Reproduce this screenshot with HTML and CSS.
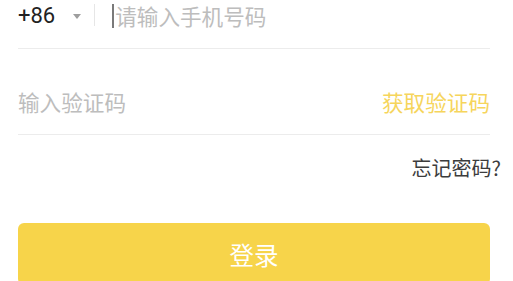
FILE: index.html
```html
<!DOCTYPE html>
<html lang="zh-CN">
<head>
<meta charset="utf-8">
<title>登录</title>
<link rel="stylesheet" href="styles.css">
</head>
<body>
<main class="login">
  <div class="field field--first">
    <div class="country">
      <span class="country-code">+86</span>
      <span class="arrow"></span>
    </div>
    <span class="sep"></span>
    <span class="caret"></span>
    <span class="placeholder">请输入手机号码</span>
  </div>
  <div class="field">
    <span class="placeholder">输入验证码</span>
    <span class="get-code">获取验证码</span>
  </div>
  <div class="forgot-row">
    <span class="forgot">忘记密码?</span>
  </div>
  <button class="submit" type="button">登录</button>
</main>
</body>
</html>
```
FILE: styles.css
```css
html, body {
  margin: 0;
  padding: 0;
  background: #ffffff;
  overflow: hidden;
}

body {
  font-family: "Noto Sans CJK SC", "Noto Sans", sans-serif;
}

.login {
  padding: 0 23px 0 18px;
  display: flex;
  flex-direction: column;
}

.field {
  display: flex;
  align-items: center;
  height: 32px;
  padding: 37px 0 16px;
  border-bottom: 1px solid #ececec;
}

.field--first {
  padding-top: 0;
}

.country {
  display: flex;
  align-items: center;
  gap: 18px;
}

.country-code {
  font-family: Roboto, "Noto Sans", sans-serif;
  font-size: 22px;
  color: #222222;
  line-height: 32px;
}

.arrow {
  width: 0;
  height: 0;
  border-left: 4.5px solid transparent;
  border-right: 4.5px solid transparent;
  border-top: 5px solid #9e9e9e;
}

.sep {
  width: 1px;
  height: 22px;
  background: #e6e6e6;
  margin: 0 17px 0 13px;
  position: relative;
  top: -1px;
}

.caret {
  width: 2px;
  height: 24px;
  background: #7a7a7a;
  margin-right: 1px;
}

.placeholder {
  font-size: 21.6px;
  line-height: 32px;
  color: #bdbdbd;
}

.get-code {
  margin-left: auto;
  font-size: 21.6px;
  line-height: 32px;
  color: #f6d55c;
}

.forgot-row {
  display: flex;
  justify-content: flex-end;
  margin: 17px -11px 0 0;
}

.forgot {
  font-size: 20px;
  line-height: 32px;
  color: #3c3c3c;
}

.submit {
  margin-top: 39px;
  height: 62px;
  border: none;
  border-radius: 6px;
  background: #f7d44a;
  color: #ffffff;
  font-family: "Noto Sans CJK SC", "Noto Sans", sans-serif;
  font-size: 24.5px;
  padding: 0;
}
```
